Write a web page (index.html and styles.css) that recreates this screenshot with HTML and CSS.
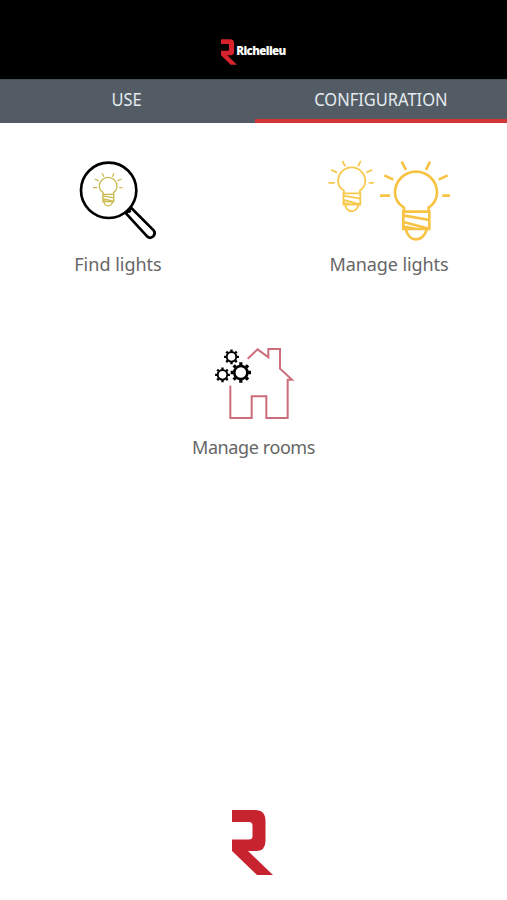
FILE: index.html
```html
<!DOCTYPE html>
<html lang="en">
<head>
  <meta charset="UTF-8">
  <meta name="viewport" content="width=device-width, initial-scale=1.0">
  <title>Richelieu</title>
  <link rel="stylesheet" href="styles.css">
</head>
<body>
<svg width="0" height="0" class="defs">
  <symbol id="r-mark" viewBox="0 0 41 65">
    <path d="M0 0H23Q33.500 0 33.500 11V31Q33.500 41 24 41H16L41 65H25L0 41V29.500H17Q20.500 29.500 20.500 26V15.500Q20.500 12 17 12H0Z"/>
  </symbol>
  <symbol id="bulb" viewBox="0 0 216 242" overflow="visible">
    <path d="M72 156V142Q45 124 45 97A63 63 0 0 1 171 97Q171 124 146 142V156M70 154H148V206H70ZM70 165L148 179M70 185L148 205M70 199L110 206M77 206Q85 237 108 237T141 206M0 106H30M13 45L40 58M65 4L78 29M150 4L138 29M203 45L176 58M187 106H210"/>
  </symbol>
  <symbol id="gear" viewBox="-30 -30 60 60" overflow="visible">
    <circle r="20" fill="none" stroke-width="8"/>
    <path stroke-width="10" d="M0-22V-31M0 22V31M-22 0H-31M22 0H31M16-16L22-22M-16-16L-22-22M16 16L22 22M-16 16L-22 22"/>
  </symbol>
</svg>

<header class="header">
  <div class="brand">
    <svg class="brand-mark"><use href="#r-mark"/></svg>
    <span class="brand-name">Richelieu</span>
  </div>
</header>

<nav class="tabs">
  <a class="tab"><span>USE</span></a>
  <a class="tab active"><span>CONFIGURATION</span></a>
</nav>

<main class="menu">
  <div class="menu-row">
    <a class="item find">
      <svg width="100" height="100" viewBox="-5 0 300 300">
        <circle class="lens" cx="117" cy="121" r="83"/>
        <path class="handle" d="M169 190L185 174L252 241Q259 250 251 259Q242 267 233 260ZM173 177L182 187"/>
        <use class="bulb-olive" href="#bulb" x="70" y="68" width="91" height="102"/>
      </svg>
      <span class="label">Find lights</span>
    </a>
    <a class="item lights">
      <svg width="140" height="100" viewBox="1 0 420 300">
        <use class="bulb-small" href="#bulb" x="26" y="30" width="140" height="157"/>
        <use class="bulb-large" href="#bulb" x="181" y="31" width="216" height="242"/>
      </svg>
      <span class="label">Manage lights</span>
    </a>
  </div>
  <a class="item rooms">
    <svg width="100" height="90" viewBox="-4 0 300 270">
      <path class="house" d="M127 56L157 28L189 52V27H224V86L260 119H247V234H183V169H139V234H75V137"/>
      <g class="gears">
        <use href="#gear" x="57" y="29" width="43" height="43"/>
        <use href="#gear" x="30" y="83" width="43" height="43"/>
        <use href="#gear" x="77" y="68" width="59" height="59"/>
      </g>
    </svg>
    <span class="label">Manage rooms</span>
  </a>
</main>

<footer class="footer">
  <svg class="footer-mark"><use href="#r-mark"/></svg>
</footer>
</body>
</html>
```
FILE: styles.css
```css
* {
  box-sizing: border-box;
}
body {
  margin: 0;
  height: 900px;
  display: flex;
  flex-direction: column;
  background-color: #fff;
  color: #666;
  font-family: "Noto Sans", sans-serif;
  overflow: hidden;
}
.defs {
  display: none;
}
.header {
  height: 79px;
  padding-top: 39px;
  background-color: #000;
}
.brand {
  display: flex;
  justify-content: center;
}
.brand-mark {
  width: 16px;
  height: 26px;
  fill: #d8232f;
}
.brand-name {
  margin: 4px 0 0 -1px;
  color: #fff;
  font-family: "Open Sans", sans-serif;
  font-size: 11.5px;
  font-weight: 800;
  line-height: 16px;
  letter-spacing: -0.6px;
}
.tabs {
  display: grid;
  grid-template-columns: 255px 1fr;
  height: 44px;
  background-color: #535c64;
  border-top: 1px solid #465057;
}
.tab {
  padding: 6px 1px 0 0;
  color: #e4ebf0;
  font-size: 18px;
  line-height: 26px;
  text-align: center;
}
.tab.active {
  border-bottom: 4px solid #d33536;
}
.tab span {
  display: inline-block;
  transform: scaleX(0.915);
}
.menu {
  flex: 1;
  padding-top: 27px;
}
.menu-row {
  display: flex;
  justify-content: space-between;
  padding: 0 48px 0 68px;
  margin-bottom: 62px;
}
.item {
  display: flex;
  flex-direction: column;
  align-items: center;
}
.lights svg {
  position: relative;
  left: 1px;
}
.item svg {
  fill: none;
}
.label {
  font-size: 18px;
  line-height: 28px;
  white-space: nowrap;
}
.lights .label {
  letter-spacing: -0.1px;
}
.rooms .label {
  margin-top: 3px;
  letter-spacing: -0.4px;
}
.lens {
  stroke: #000;
  stroke-width: 8;
}
.handle {
  stroke: #000;
  stroke-width: 8;
  stroke-linejoin: round;
}
.bulb-olive {
  stroke: #c9b94c;
  stroke-width: 9;
}
.bulb-small {
  stroke: #f6c94f;
  stroke-width: 8.5;
}
.bulb-large {
  stroke: #f8c344;
  stroke-width: 8;
}
.house {
  stroke: #cc6d7b;
  stroke-width: 6;
}
.gears {
  stroke: #000;
}
.footer {
  display: flex;
  justify-content: center;
  padding: 0 2px 25px 0;
}
.footer-mark {
  width: 41px;
  height: 65px;
  fill: #c8242f;
}
```
